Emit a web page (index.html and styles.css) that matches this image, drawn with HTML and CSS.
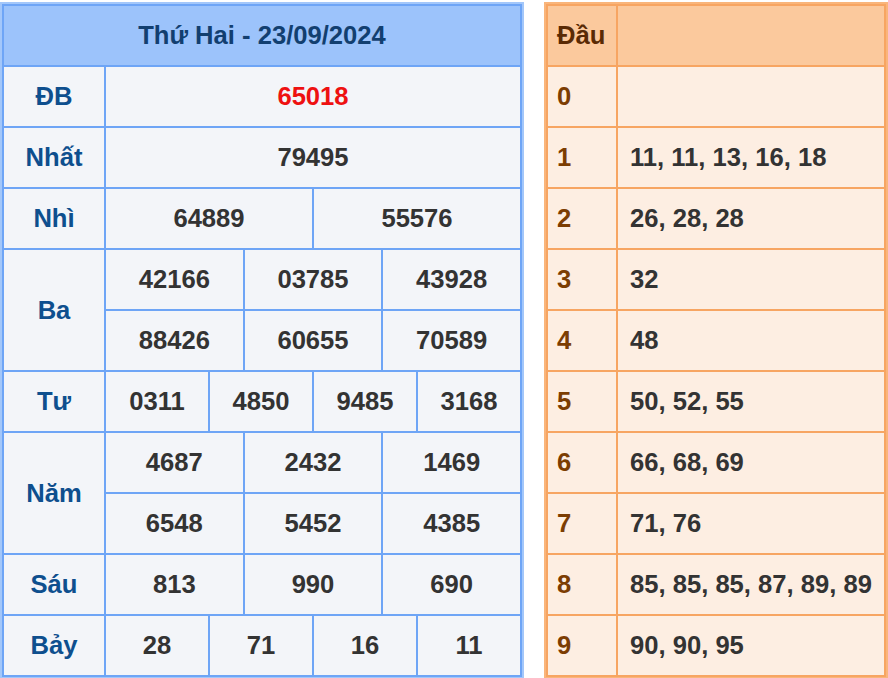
FILE: index.html
```html
<!DOCTYPE html>
<html lang="vi">
<head>
<meta charset="utf-8">
<link rel="stylesheet" href="styles.css">
</head>
<body>
<div class="page">
  <div class="kq">
    <div class="c head span-all">Thứ Hai - 23/09/2024</div>

    <div class="c lbl r1">ĐB</div>
    <div class="c num red s12">65018</div>

    <div class="c lbl r1">Nhất</div>
    <div class="c num s12">79495</div>

    <div class="c lbl r1">Nhì</div>
    <div class="c num s6">64889</div>
    <div class="c num s6">55576</div>

    <div class="c lbl r2">Ba</div>
    <div class="c num s4">42166</div>
    <div class="c num s4">03785</div>
    <div class="c num s4">43928</div>
    <div class="c num s4">88426</div>
    <div class="c num s4">60655</div>
    <div class="c num s4">70589</div>

    <div class="c lbl r1">Tư</div>
    <div class="c num s3">0311</div>
    <div class="c num s3">4850</div>
    <div class="c num s3">9485</div>
    <div class="c num s3">3168</div>

    <div class="c lbl r2">Năm</div>
    <div class="c num s4">4687</div>
    <div class="c num s4">2432</div>
    <div class="c num s4">1469</div>
    <div class="c num s4">6548</div>
    <div class="c num s4">5452</div>
    <div class="c num s4">4385</div>

    <div class="c lbl r1">Sáu</div>
    <div class="c num s4">813</div>
    <div class="c num s4">990</div>
    <div class="c num s4">690</div>

    <div class="c lbl r1">Bảy</div>
    <div class="c num s3">28</div>
    <div class="c num s3">71</div>
    <div class="c num s3">16</div>
    <div class="c num s3">11</div>
  </div>

  <div class="dau">
    <div class="d key dhead">Đầu</div>
    <div class="d dhead"></div>
    <div class="d key">0</div><div class="d val"></div>
    <div class="d key">1</div><div class="d val">11, 11, 13, 16, 18</div>
    <div class="d key">2</div><div class="d val">26, 28, 28</div>
    <div class="d key">3</div><div class="d val">32</div>
    <div class="d key">4</div><div class="d val">48</div>
    <div class="d key">5</div><div class="d val">50, 52, 55</div>
    <div class="d key">6</div><div class="d val">66, 68, 69</div>
    <div class="d key">7</div><div class="d val">71, 76</div>
    <div class="d key">8</div><div class="d val">85, 85, 85, 87, 89, 89</div>
    <div class="d key">9</div><div class="d val">90, 90, 95</div>
  </div>
</div>
</body>
</html>
```

FILE: styles.css
```css
html, body {
  margin: 0;
  padding: 0;
  background: #ffffff;
  overflow: hidden;
}

body {
  font-family: "Liberation Sans", Arial, sans-serif;
  font-weight: bold;
  font-size: 25.6px;
}

.page {
  display: flex;
  align-items: flex-start;
  gap: 20px;
  padding-top: 2px;
  width: 888px;
}

.kq {
  width: 524px;
  box-sizing: border-box;
  display: grid;
  grid-template-columns: 100px repeat(12, 1fr);
  grid-auto-rows: 59px;
  gap: 2px;
  padding: 2px;
  background: #6ea5f6;
  border: 2px solid #a3c7fa;
}

.c {
  display: flex;
  align-items: center;
  justify-content: center;
  background: #f3f5f9;
  color: #333333;
}

.head {
  background: #9cc3fb;
  color: #123f70;
}

.span-all { grid-column: 1 / -1; }

.lbl { color: #0e4f8e; grid-column: 1 / 2; }
.r1 { grid-row: span 1; }
.r2 { grid-row: span 2; }

.s12 { grid-column: span 12; }
.s6 { grid-column: span 6; }
.s4 { grid-column: span 4; }
.s3 { grid-column: span 3; }

.red { color: #ee1111; }

.dau {
  width: 344px;
  box-sizing: border-box;
  display: grid;
  grid-template-columns: 68px 1fr;
  grid-auto-rows: 59px;
  gap: 2px;
  padding: 2px;
  background: #f7a562;
  border: 2px solid #f9b57b;
}

.d {
  display: flex;
  align-items: center;
  padding-left: 12px;
  background: #fdeee2;
  color: #333333;
}

.d.key { padding-left: 9px; color: #7c3d02; }

.d.dhead {
  background: #fbc99d;
  color: #5a2a04;
}
```
